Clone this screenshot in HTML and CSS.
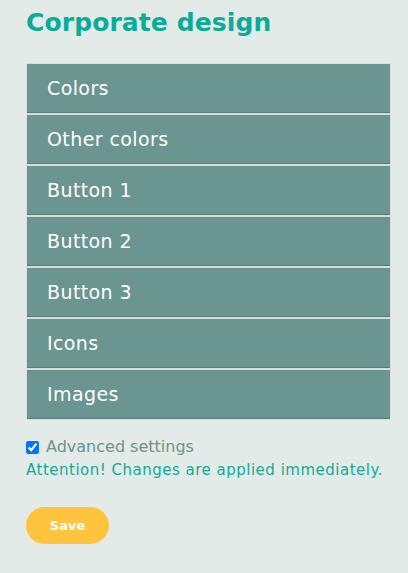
FILE: index.html
```html
<!DOCTYPE html>
<html lang="en">
<head>
<meta charset="utf-8">
<title>Corporate design</title>
<link rel="stylesheet" href="styles.css">
</head>
<body>
<main class="page">
  <h1 class="title">Corporate design</h1>
  <ul class="menu">
    <li class="menu-item">Colors</li>
    <li class="menu-item">Other colors</li>
    <li class="menu-item">Button 1</li>
    <li class="menu-item">Button 2</li>
    <li class="menu-item">Button 3</li>
    <li class="menu-item">Icons</li>
    <li class="menu-item">Images</li>
  </ul>
  <label class="advanced">
    <input type="checkbox" class="advanced-check" checked>
    <span>Advanced settings</span>
  </label>
  <p class="notice">Attention! Changes are applied immediately.</p>
  <button class="save" type="button">Save</button>
</main>
</body>
</html>
```

FILE: styles.css
```css
html, body {
  margin: 0;
  padding: 0;
  background: #e2ebe8;
}
body {
  font-family: "DejaVu Sans", "Open Sans", sans-serif;
}
.page {
  display: flex;
  flex-direction: column;
  align-items: flex-start;
  padding: 6px 17px 20px 26px;
}
.title {
  margin: 0;
  font-size: 25px;
  line-height: 33px;
  font-weight: 700;
  color: #0aab97;
  letter-spacing: 0.1px;
}
.menu {
  list-style: none;
  margin: 24px 0 0 0;
  padding: 0;
  align-self: stretch;
  border: 1px solid #d9dedd;
  background: #d6dcda;
  display: flex;
  flex-direction: column;
  gap: 2px;
}
.menu-item {
  height: 48px;
  line-height: 48px;
  padding-left: 20px;
  background: #6a9590;
  border-bottom: 1px solid #55807a;
  color: #ffffff;
  font-size: 19px;
  letter-spacing: 0.4px;
}
.advanced {
  display: flex;
  align-items: center;
  margin-top: 19px;
  color: #6f928d;
  font-size: 16px;
  line-height: 16px;
}
.advanced-check {
  margin: 0 7px 0 0;
  width: 13px;
  height: 13px;
}
.notice {
  margin: 6px 0 0 0;
  color: #16a997;
  font-size: 15px;
  line-height: 18px;
  letter-spacing: 0.5px;
}
.save {
  margin-top: 28px;
  width: 83px;
  height: 37px;
  border: none;
  border-radius: 19px;
  background: #ffc43e;
  color: #ffffff;
  font-family: "DejaVu Sans", sans-serif;
  font-weight: 700;
  font-size: 13px;
}
```
